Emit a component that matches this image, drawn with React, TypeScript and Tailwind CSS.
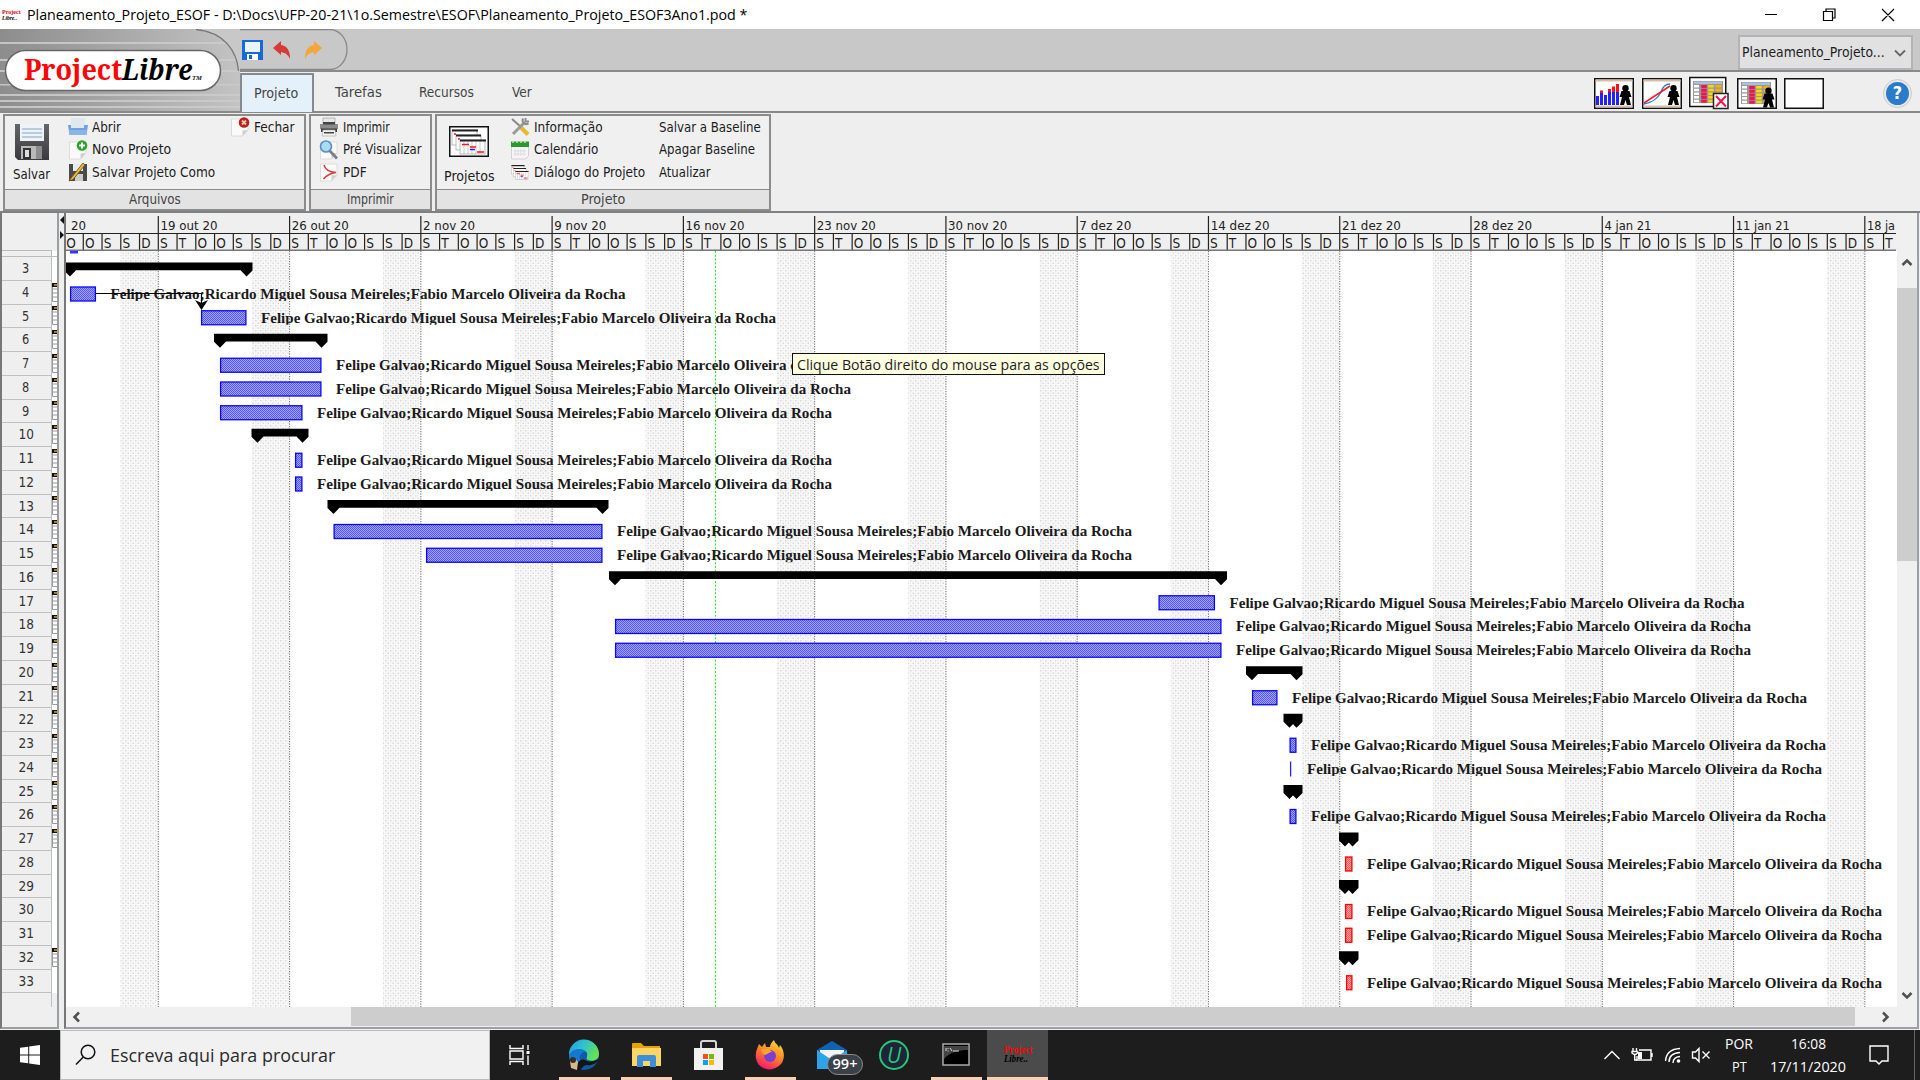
import React, { useLayoutEffect, useRef, useState } from "react";

/* Text squeezed or stretched to a fixed width. */
function Fit({ w, children, className = "" }: { w: number; children: string; className?: string }) {
  const ref = useRef<HTMLSpanElement>(null);
  const [s, setS] = useState(1);
  useLayoutEffect(() => {
    if (ref.current) setS(w / ref.current.offsetWidth);
  }, [w]);
  return (
    <span className={"block shrink-0 whitespace-nowrap " + className} style={{ width: w }}>
      <span ref={ref} className="inline-block origin-left" style={{ transform: `scaleX(${s})` }}>
        {children}
      </span>
    </span>
  );
}

const UI = "font-['DejaVu_Sans_Condensed','DejaVu_Sans',sans-serif]";
const SEG = "font-['Open_Sans','Noto_Sans',sans-serif]";

/* ---------- ribbon icons ---------- */
const BigSave = () => (
  <svg width="36" height="38" viewBox="0 0 36 38">
    <defs>
      <linearGradient id="bs" x1="0" y1="0" x2="0" y2="1">
        <stop offset="0" stopColor="#666" />
        <stop offset="1" stopColor="#3a3a3e" />
      </linearGradient>
    </defs>
    <path d="M1 1H35V37H4L1 34Z" fill="url(#bs)" />
    <rect x="6" y="1" width="24" height="17" fill="#eef3f8" />
    <path d="M8 6H28M8 10H28M8 14H28" stroke="#a9bfd4" strokeWidth="1.5" />
    <rect x="7" y="23" width="21" height="13" fill="#b9b9b9" />
    <rect x="9" y="25" width="8" height="11" fill="#333" />
    <rect x="11" y="27" width="4" height="7" fill="#ddd" />
    <rect x="22" y="23" width="6" height="13" fill="#8d8d8d" />
  </svg>
);
const OpenIcon = () => (
  <svg width="20" height="20" viewBox="0 0 20 20">
    <path d="M3 1H17V12H3Z" fill="#dfe7ef" />
    <path d="M0 8H3V11H16V8H20L18.500 18H1.500Z" fill="#6fa3e0" />
    <path d="M1 13H19L18 18H2Z" fill="#88b6ea" />
  </svg>
);
const PageIcon = ({ kind }: { kind: "plus" | "x" | "pdf" | "zoom" }) => (
  <svg width="20" height="20" viewBox="0 0 20 20">
    <path d="M1.500 2H18V13L12.500 19H1.500Z" fill="#fafafa" stroke="#d6d6d6" strokeWidth=".8" />
    <path d="M18 13L12.500 19V13.500Z" fill="#cfcfcf" />
    {kind === "plus" && (
      <g>
        <circle cx="14" cy="5.500" r="5.300" fill="#2ea32e" />
        <path d="M14 2.500V8.500M11 5.500H17" stroke="#fff" strokeWidth="2" />
      </g>
    )}
    {kind === "x" && (
      <g>
        <circle cx="14" cy="5.500" r="5.300" fill="#b5231b" />
        <path d="M12 3.500L16 7.500M16 3.500L12 7.500" stroke="#f5c0b8" strokeWidth="1.800" />
      </g>
    )}
    {kind === "pdf" && <path d="M5 3C6 7 10 10 17 10.500C12 11 8 13 4.500 17" stroke="#d93c3c" strokeWidth="1.500" fill="none" />}
    {kind === "zoom" && (
      <g>
        <path d="M10 10L18 18.500" stroke="#7c8088" strokeWidth="2.800" />
        <circle cx="7" cy="6.500" r="5.500" fill="#a8dcf2" stroke="#5b8fc4" strokeWidth="1.600" />
      </g>
    )}
  </svg>
);
const SaveAs = () => (
  <svg width="20" height="20" viewBox="0 0 20 20">
    <path d="M1 2H19V19H2L1 18Z" fill="#4a4a4a" />
    <rect x="5" y="2" width="10" height="7" fill="#e6ebf0" />
    <rect x="7" y="12" width="8" height="7" fill="#ccc" />
    <path d="M15 1L3 16L1 19L5 17.500L17 3Z" fill="#e9b83a" stroke="#5d4613" strokeWidth=".8" />
  </svg>
);
const Printer = () => (
  <svg width="20" height="20" viewBox="0 0 20 20">
    <path d="M4 1H16V8H4Z" fill="#e6e6e6" stroke="#999" strokeWidth=".6" />
    <path d="M1 7H19V12H1Z" fill="#8b8b8b" />
    <path d="M2 11.500H18V15H2Z" fill="#3f3f3f" />
    <path d="M4 13H16L17 19H3Z" fill="#f3f3f3" stroke="#aaa" strokeWidth=".6" />
    <path d="M4 5H16V7.500H4ZM5 15H15V16.500H5Z" fill="#444" />
  </svg>
);
const Tools = () => (
  <svg width="20" height="20" viewBox="0 0 20 20">
    <path d="M2 2L11 10" stroke="#888" strokeWidth="2" />
    <path d="M10 9.500L18 17.500" stroke="#e8b92c" strokeWidth="4" />
    <path d="M3 17L14 6" stroke="#9a9a9a" strokeWidth="3" />
    <path d="M13 1.500C11.500 5 14.500 8.500 18.500 6.500M15.500 1V4.500H19" stroke="#8d8d8d" strokeWidth="2" fill="none" />
  </svg>
);
const Calendar = () => (
  <svg width="20" height="20" viewBox="0 0 20 20">
    <path d="M1.500 5H18.500V16L15 19H1.500Z" fill="#f6f6f6" stroke="#d2d2d2" />
    <rect x="1" y="1.500" width="18" height="5.500" fill="#2b9a2b" />
    <path d="M3 1V3M7 1V3M11 1V3M15 1V3" stroke="#bfe6bf" strokeWidth="1.500" />
    <path d="M5 9V16M8 9V16M11 9V16M14 9V16M4 11H16M4 14H16" stroke="#ddd6e2" strokeWidth=".8" />
  </svg>
);
const Sheets = ({ big }: { big?: boolean }) => (
  <svg width={big ? 40 : 20} height={big ? 31 : 18} viewBox="0 0 40 31" preserveAspectRatio="none">
    {big && <rect x=".75" y=".75" width="38.500" height="29.500" fill="#fff" stroke="#111" strokeWidth="1.500" />}
    <g fill="#fff" stroke="#aaa" strokeWidth=".8">
      <rect x="3" y="4" width="25" height="15" />
      <rect x="7" y="9" width="25" height="15" />
      <rect x="11" y="14" width="25" height="14" />
    </g>
    <path d="M15 14V28M19 14V28M23 14V28M27 14V28M31 14V28" stroke="#bbb" strokeWidth=".8" />
    <path d="M3 4.500H29M7 9.500H32M11 14.500H37" stroke="#222" strokeWidth="1.800" />
    <path d="M5 8H7M9 13H11M13 18.500H20M21 21H27M28 26H35" stroke="#f01818" strokeWidth="1.500" />
    <path d="M21 23.500H26" stroke="#22f" strokeWidth="1.500" />
  </svg>
);

const Item = ({ icon, w, children }: { icon?: React.ReactNode; w: number; children: string }) => (
  <div className="flex h-[22.5px] items-center">
    {icon && <span className="mr-1 w-5 shrink-0">{icon}</span>}
    <Fit w={w}>{children}</Fit>
  </div>
);

const Group = ({ w, label, lw, children }: { w: string; label: string; lw: number; children: React.ReactNode }) => (
  <div className={"flex h-[97px] flex-col border-2 border-[#8b8b8b] bg-[#f0f0f0] " + w}>
    <div className="flex grow">{children}</div>
    <div className="flex h-[20px] items-center justify-center border-t border-[#8b8b8b] bg-[#e3e3e3] text-[#444]">
      <Fit w={lw}>{label}</Fit>
    </div>
  </div>
);

/* ---------- view buttons ---------- */
const Person = ({ x, y }: { x: number; y: number }) => (
  <g transform={`translate(${x} ${y})`} fill="#000">
    <circle cx="6" cy="3.200" r="3.200" />
    <path d="M2 6H10L12 12H9.500L11.500 20H7.500L6 15L4.500 20H.5L2.500 12H0Z" />
  </g>
);
const Table = () => (
  <g>
    <rect x="4" y="4" width="30" height="22" fill="#999" />
    <rect x="5" y="4.500" width="28" height="2.500" fill="#a9c0e4" />
    <path d="M7.500 8V26" stroke="#fff" strokeWidth="5" strokeDasharray="2.500 1.200" />
    <path d="M15 8V26" stroke="#f0134d" strokeWidth="5.500" strokeDasharray="3 .7" />
    <path d="M22 8V26" stroke="#ffd800" strokeWidth="5.500" strokeDasharray="2.500 1.200" />
    <path d="M29.500 8V26" stroke="#f5b400" strokeWidth="6" strokeDasharray="2.500 1.200" />
  </g>
);
const Box = ({ children, tan }: { children?: React.ReactNode; tan?: boolean }) => (
  <svg width="40" height="31" viewBox="0 0 40 31" overflow="visible">
    <rect x=".75" y=".75" width="38.500" height="29.500" fill="#fff" stroke="#111" strokeWidth="1.500" />
    {tan && <path d="M1.500 2.500H38.500M1.500 28.500H38.500" stroke="#d9bda8" strokeWidth="2" />}
    {children}
  </svg>
);

/* ---------- schedule ---------- */
type Row = { n: number; t: "s" | "b" | "r" | "l"; a: number; z: number };
const rows: Row[] = [
  { n: 3, t: "s", a: 64, z: 252.5 }, { n: 4, t: "b", a: 70, z: 96 }, { n: 5, t: "b", a: 201, z: 246.5 },
  { n: 6, t: "s", a: 214, z: 327.5 }, { n: 7, t: "b", a: 220, z: 321.5 }, { n: 8, t: "b", a: 220, z: 321.5 },
  { n: 9, t: "b", a: 220, z: 302.5 }, { n: 10, t: "s", a: 251.5, z: 308.5 }, { n: 11, t: "b", a: 295, z: 302.5 },
  { n: 12, t: "b", a: 295, z: 302.5 }, { n: 13, t: "s", a: 327.5, z: 608.5 }, { n: 14, t: "b", a: 333.5, z: 602.5 },
  { n: 15, t: "b", a: 426, z: 602.5 }, { n: 16, t: "s", a: 609, z: 1227 }, { n: 17, t: "b", a: 1158.5, z: 1215 },
  { n: 18, t: "b", a: 615, z: 1221.5 }, { n: 19, t: "b", a: 615, z: 1221.5 }, { n: 20, t: "s", a: 1246, z: 1302.5 },
  { n: 21, t: "b", a: 1252, z: 1277.5 }, { n: 22, t: "s", a: 1283.5, z: 1302.5 }, { n: 23, t: "b", a: 1289.5, z: 1296.5 },
  { n: 24, t: "l", a: 1290, z: 1292.5 }, { n: 25, t: "s", a: 1283.5, z: 1302.5 }, { n: 26, t: "b", a: 1289.5, z: 1296.5 },
  { n: 27, t: "s", a: 1339, z: 1358.5 }, { n: 28, t: "r", a: 1345, z: 1352.5 }, { n: 29, t: "s", a: 1339, z: 1358.5 },
  { n: 30, t: "r", a: 1345, z: 1352.5 }, { n: 31, t: "r", a: 1345, z: 1352.5 }, { n: 32, t: "s", a: 1339, z: 1358.5 },
  { n: 33, t: "r", a: 1346, z: 1352.5 },
];
const cy = (n: number) => 294 + (n - 4) * 23.75;
const WEEK = 131.27;
const weeks = ["19 out 20", "26 out 20", "2 nov 20", "9 nov 20", "16 nov 20", "23 nov 20", "30 nov 20", "7 dez 20", "14 dez 20", "21 dez 20", "28 dez 20", "4 jan 21", "11 jan 21", "18 ja"];
const weekW = [57, 57, 52, 52, 59, 59, 59, 52, 59, 59, 59, 47, 54, 28];
const days = ["S", "T", "O", "O", "S", "S", "D"];
const NAMES = "Felipe Galvao;Ricardo Miguel Sousa Meireles;Fabio Marcelo Oliveira da Rocha";

const Ruler = () => (
  <svg width="1830" height="37" viewBox="66 214 1830 37" className="block shrink-0">
    <rect x="66" y="214" width="1830" height="37" fill="#efefef" />
    <path d="M66 233.500H1896" stroke="#222" strokeWidth="1.200" />
    <g className={UI} fontSize="13" fill="#222">
      <text x="71" y="229.500" textLength="15" lengthAdjust="spacingAndGlyphs">20</text>
      {weeks.map((w, i) => (
        <text key={i} x={160.5 + i * WEEK} y="229.500" textLength={weekW[i]} lengthAdjust="spacingAndGlyphs">{w}</text>
      ))}
      {Array.from({ length: 98 }, (_, k) => k - 5).map((k) => {
        const x = 158.3 + (k * WEEK) / 7;
        return x < 1893 ? (
          <g key={k}>
            <path d={`M${x} ${k % 7 === 0 ? 216 : 234}V250`} stroke="#222" strokeWidth="1.200" />
            <text x={x + 1.6} y="248.300" fontSize="13.500">{days[(k + 7) % 7]}</text>
          </g>
        ) : null;
      })}
    </g>
    <path d="M66 250.200H1896" stroke="#777" strokeWidth="1.600" />
  </svg>
);

const Chart = () => (
  <svg width="1831" height="756" viewBox="66 251 1831 756" className="block shrink-0">
    <defs>
      <pattern id="we" width="5" height="5" patternUnits="userSpaceOnUse">
        <rect width="5" height="5" fill="#fafafa" />
        <rect x="0" y="0" width="1.500" height="1.500" fill="#dadada" />
        <rect x="2.500" y="2.500" width="1.500" height="1.500" fill="#dadada" />
        <rect x="2.500" y="0" width="1.200" height="1.200" fill="#ebebeb" />
        <rect x="0" y="2.500" width="1.200" height="1.200" fill="#ebebeb" />
      </pattern>
      <pattern id="bl" width="2" height="2" patternUnits="userSpaceOnUse">
        <rect width="2" height="2" fill="#a2a2ff" />
        <path d="M0 0H1V1H2V2H1V1H0Z" fill="#5656ff" shapeRendering="crispEdges" />
      </pattern>
      <pattern id="rd" width="2" height="2" patternUnits="userSpaceOnUse">
        <rect width="2" height="2" fill="#ffa2a2" />
        <path d="M0 0H1V1H2V2H1V1H0Z" fill="#ff5656" shapeRendering="crispEdges" />
      </pattern>
      <clipPath id="cl">
        {rows.map((r) => <rect key={r.n} x="66" y={cy(r.n) - 10} width="1831" height="17" />)}
      </clipPath>
    </defs>
    <rect x="66" y="251" width="1831" height="756" fill="#fff" />
    {Array.from({ length: 14 }, (_, i) => (
      <g key={i}>
        <rect x={120.5 + i * WEEK} y="251" width="37" height="756" fill="url(#we)" />
        <path d={`M${158.3 + i * WEEK} 251V1007`} stroke="#777" strokeWidth="1.100" strokeDasharray="1.25 1.25" />
      </g>
    ))}
    <path d="M715.500 251V1007" stroke="#22f022" strokeWidth="1.100" strokeDasharray="2 1.75" />
    <rect x="70" y="251" width="8" height="2.500" fill="#33f" />
    {rows.map(({ n, t, a, z }) => {
      const y = cy(n);
      if (t === "s")
        return (
          <path key={n} d={`M${a} ${y - 7.7}H${z}V${y + 0.3}L${z - 6} ${y + 6.3}L${z - 12} ${y}H${a + 12}L${a + 6} ${y + 6.3}L${a} ${y + 0.3}Z`} fill="#000" />
        );
      if (t === "l") return <path key={n} d={`M${a + 0.6} ${y - 7.5}V${y + 7.5}`} stroke="#22f" strokeWidth="1.300" />;
      return (
        <rect key={n} x={a + 0.6} y={y - 7} width={z - a - 1.2} height="14" strokeWidth="1.300"
          fill={t === "b" ? "url(#bl)" : "url(#rd)"} stroke={t === "b" ? "#0808f0" : "#f00"} />
      );
    })}
    <g clipPath="url(#cl)" fontSize="13.800" fontWeight="bold" fill="#1a1a1a" className="font-['Liberation_Serif',serif]">
      {rows.filter((r) => r.t !== "s").map((r) => (
        <text key={r.n} x={r.z + 14.5} y={cy(r.n) + 4.8} textLength="515" lengthAdjust="spacingAndGlyphs">{NAMES}</text>
      ))}
    </g>
    <path d="M96 293.500H201.500V303" stroke="#000" strokeWidth="1.200" fill="none" />
    <path d="M195 300L201.500 303L208 300L201.500 310Z" fill="#000" />
  </svg>
);

/* ---------- taskbar ---------- */
const Slot = ({ w, line, active, children }: { w: string; line?: boolean; active?: boolean; children: React.ReactNode }) => (
  <div className={"relative flex h-[50px] shrink-0 items-center justify-center " + w + (active ? " bg-[#4b4b4b]" : "")}>
    {children}
    {line && <div className={"absolute bottom-0 h-[3px] bg-[#fbcfb2] " + (active ? "w-[61px]" : "w-[51px]")} />}
  </div>
);

export default function App() {
  return (
    <div className={"flex h-[1080px] w-[1920px] flex-col overflow-hidden bg-[#eee] text-[13.5px] leading-none text-[#1c1c1c] " + UI}>
      {/* title bar */}
      <div className={"flex h-[29px] shrink-0 items-center bg-white pl-[2px] text-black " + SEG}>
        <div className="w-[20px] font-['Liberation_Serif',serif] text-[7px] font-bold leading-[6px]">
          <Fit w={19} className="text-red-600">Project</Fit>
          <Fit w={15} className="italic">Libre..</Fit>
        </div>
        <div className="ml-[5px] text-[15px]">
          <Fit w={720}>{"Planeamento_Projeto_ESOF - D:\\Docs\\UFP-20-21\\1o.Semestre\\ESOF\\Planeamento_Projeto_ESOF3Ano1.pod *"}</Fit>
        </div>
        <svg className="ml-auto mr-[24px]" width="132" height="16" viewBox="0 0 132 16" fill="none" stroke="#000" strokeWidth="1.200">
          <path d="M1 7.500H13M59.500 4.500H68.500V13.500H59.500ZM62 4V2H71V11H69M118 2L130 14M130 2L118 14" />
        </svg>
      </div>

      {/* quick access bar + tabs */}
      <div className="flex h-[84px] shrink-0 border-b-2 border-[#8a8a8a]">
        <div className="relative h-full w-[240px] shrink-0 overflow-hidden bg-[#c8c8c8]">
          <svg width="240" height="83" viewBox="0 29 240 83" className="absolute left-0 top-0">
            <defs>
              <linearGradient id="lg" x1="0" y1="0" x2="1" y2="0">
                <stop offset="0" stopColor="#8d8d8d" />
                <stop offset="1" stopColor="#c3c3c3" />
              </linearGradient>
              <linearGradient id="ln" x1="0" y1="0" x2="1" y2="0">
                <stop offset="0" stopColor="#c4c4c4" />
                <stop offset="1" stopColor="#cacaca" />
              </linearGradient>
            </defs>
            <path d="M0 29H200C225 34 237 52 238.500 71H240V112H0Z" fill="url(#lg)" />
            <g fill="url(#ln)">
              <rect y="42" width="225" height="2" />
              <rect y="59" width="236" height="2" />
              <rect y="70" width="240" height="2" />
              <rect y="84" width="240" height="1.500" />
              <rect y="94" width="240" height="2" />
              <rect y="100" width="240" height="2" />
              <rect y="106" width="240" height="2" />
            </g>
            <path d="M196 29.500C225 32 237 52 238.500 71" fill="none" stroke="#777" strokeWidth="1.300" />
            <rect x="5.500" y="50.500" width="215" height="40" rx="20" fill="#fff" stroke="#666" strokeWidth="1.500" />
          </svg>
          <div className="absolute left-[24px] top-[22px] flex h-[34px] items-center font-['Noto_Serif','DejaVu_Serif_Condensed','DejaVu_Serif',serif] text-[29px] font-bold">
            <Fit w={98} className="text-[#fb0606]">Project</Fit>
            <Fit w={70} className="italic text-black">Libre</Fit>
            <span className="mt-[20px] text-[6px] italic">TM</span>
          </div>
        </div>
        <div className="flex grow flex-col">
          <div className="flex h-[43px] shrink-0 border-b-2 border-[#8a8a8a] bg-[#c8c8c8]">
            <svg width="120" height="41" viewBox="240 29 120 41">
              <path d="M240 29.500H330A17 20 0 0 1 330 69.500H240" fill="none" stroke="#888" strokeWidth="1.300" />
              <rect x="242" y="40" width="21" height="20" fill="#1769d6" />
              <rect x="245" y="42" width="15" height="10" fill="#e9f4ff" />
              <rect x="247" y="54" width="11" height="6" fill="#fff" />
              <rect x="249" y="55" width="3" height="4" fill="#1769d6" />
              <path d="M273 48L281 41V45C287 46 290 50 290 59C288 55 286 53 281 52V55Z" fill="#d63b3b" />
              <path d="M322 48L314 41V45C308 46 305 50 305 59C307 55 309 53 314 52V55Z" fill="#f4a63a" />
            </svg>
            <div className="ml-auto mr-[7px] mt-[6px] flex h-[35px] w-[175px] items-center border-2 border-[#b4b4b8] bg-[#e1e1e1] pl-[2px]">
              <Fit w={143}>Planeamento_Projeto...</Fit>
              <svg className="ml-[9px]" width="12" height="8" viewBox="0 0 12 8"><path d="M1 1.500L6 6.500L11 1.500" fill="none" stroke="#666" strokeWidth="1.800" /></svg>
            </div>
          </div>
          <div className="flex grow items-center bg-[#eee] text-[#444]">
            <div className="mt-[1px] flex h-full w-[74px] items-center justify-center border-2 border-b-0 border-[#848a90] bg-[#e4f1fb] pr-[2px] pt-[1px]"><Fit w={44}>Projeto</Fit></div>
            <Fit w={47} className="ml-[21px] mt-[3px]">Tarefas</Fit>
            <Fit w={55} className="ml-[37px] mt-[3px]">Recursos</Fit>
            <Fit w={20} className="ml-[38px] mt-[3px]">Ver</Fit>
            <div className="ml-auto mr-[8px] mt-[4px] flex items-center">
              <div className="mr-[59px] flex gap-[7.500px]">
                <Box tan>
                  <path d="M3.500 27V18M7.500 27V14M11.500 27V17M15.500 27V13M19.500 27V12M23.500 27V13" stroke="#22f" strokeWidth="3" />
                  <path d="M7.500 15V12.500M15.500 14V11M19.500 14V8.500M23.500 14V6" stroke="#f11" strokeWidth="3" />
                  <Person x={25.500} y={7} />
                </Box>
                <Box tan>
                  <path d="M2 26C12 24 16 20 19 14C21 8 24 6 28 6" stroke="#37e" strokeWidth="1.500" fill="none" />
                  <path d="M2 25L28 8" stroke="#e22" strokeWidth="1.500" />
                  <Person x={25.500} y={7} />
                </Box>
                <svg width="40" height="31" viewBox="0 0 40 31" overflow="visible">
                  <rect x="-.5" y="-1.500" width="38" height="31" fill="#fff" />
                  <rect x=".75" y="-.5" width="36" height="29" fill="#fff" stroke="#111" strokeWidth="1.500" />
                  <g transform="translate(0 -1)"><Table /></g>
                  <rect x="24.500" y="15.500" width="14.500" height="15" fill="#fff" stroke="#222" strokeWidth="1.500" />
                  <path d="M27 18L37 28.500M37 18L27 28.500" stroke="#f0134d" strokeWidth="2" />
                </svg>
                <Box><Table /><Person x={25.500} y={9.500} /></Box>
                <Box />
              </div>
              <div className="-mt-[1px] flex h-[29px] w-[29px] items-center justify-center rounded-full border border-[#ccc] bg-[#e8e8e8]">
                <div className="flex h-[23px] w-[23px] items-center justify-center rounded-full bg-[#2b7bcb] text-[18px] font-bold text-white">?</div>
              </div>
            </div>
          </div>
        </div>
      </div>

      {/* ribbon */}
      <div className="flex h-[98px] shrink-0 gap-[3px] pl-[3px] pt-[1px]">
        <Group w="w-[303px]" label="Arquivos" lw={52}>
          <div className="flex w-[47px] flex-col items-center gap-[7px] pl-[6px] pt-[7px]"><BigSave /><Fit w={37}>Salvar</Fit></div>
          <div className="ml-[16px]">
            <Item icon={<OpenIcon />} w={28.5}>Abrir</Item>
            <Item icon={<PageIcon kind="plus" />} w={79}>Novo Projeto</Item>
            <Item icon={<SaveAs />} w={123}>Salvar Projeto Como</Item>
          </div>
          <div className="ml-[15px]"><Item icon={<PageIcon kind="x" />} w={41}>Fechar</Item></div>
        </Group>
        <Group w="w-[123px]" label="Imprimir" lw={47}>
          <div className="ml-[8px]">
            <Item icon={<Printer />} w={47}>Imprimir</Item>
            <Item icon={<PageIcon kind="zoom" />} w={79}>Pré Visualizar</Item>
            <Item icon={<PageIcon kind="pdf" />} w={24}>PDF</Item>
          </div>
        </Group>
        <Group w="w-[336px]" label="Projeto" lw={44}>
          <div className="flex w-[64px] flex-col items-center gap-[13px] pt-[10px]"><Sheets big /><Fit w={51}>Projetos</Fit></div>
          <div className="ml-[9px] w-[149px]">
            <Item icon={<Tools />} w={69}>Informação</Item>
            <Item icon={<Calendar />} w={64}>Calendário</Item>
            <Item icon={<Sheets />} w={111}>Diálogo do Projeto</Item>
          </div>
          <div>
            <Item w={102}>Salvar a Baseline</Item>
            <Item w={96}>Apagar Baseline</Item>
            <Item w={52}>Atualizar</Item>
          </div>
        </Group>
      </div>

      {/* main area */}
      <div className="flex h-[819px] shrink-0 border-t-2 border-[#7d8187] bg-[#f0f0f0]">
        <div className="relative flex h-[816px] w-[59px] shrink-0 flex-col border-2 border-t-0 border-[#9a9da3] border-l-[#777] bg-[#efefef]">
          <div className="h-[38px] w-[50px] shrink-0 border-b border-[#bbb]" />
          <div className="flex h-[6px] shrink-0 border-b border-[#bbb]">
            <div className="w-[50px] border-r border-[#bbb]" /><div className="grow bg-white" />
          </div>
          {rows.map((r) => (
            <div key={r.n} className="flex h-[23.75px] shrink-0">
              <div className="flex w-[50px] shrink-0 items-center justify-center border-b border-r border-[#c0c0c0] pr-[1px] pt-[1px] text-[#333]">
                <Fit w={r.n < 10 ? 7.5 : 15}>{String(r.n)}</Fit>
              </div>
              <div className="flex grow items-center justify-end bg-white">
                {![3, 28, 29, 30, 31, 33].includes(r.n) && (
                  <svg width="5" height="20" viewBox="0 0 5 20">
                    <path d="M.5 1V18.500H5M0 6H5M0 10H5M0 14H5" stroke="#999" fill="none" />
                    <rect width="5" height="4" fill="#111" /><rect x="2" y="1.200" width="3" height="1.500" fill="#e0a020" />
                  </svg>
                )}
              </div>
            </div>
          ))}
          <div className="h-[14px] w-[50px] border-r border-[#c0c0c0]" />
        </div>
        <div className="w-[5px] shrink-0 bg-[#eee]">
          <svg width="5" height="30" viewBox="0 0 5 30"><path d="M5 3V11L1 7ZM1 18V26L5 22Z" fill="#111" /></svg>
        </div>
        <div className="flex h-[816px] w-[1855px] shrink-0 flex-col border-b-2 border-l-2 border-r-2 border-[#9ba0a8] border-l-[#777] pt-[1px]">
          <Ruler />
          <div className="flex h-[756px]">
            <div className="relative">
              <Chart />
              <div className="absolute left-[726px] top-[102px] flex h-[22px] w-[313px] items-center border border-[#111] bg-[#ffffe1] pl-[4px] text-[15px]">
                <Fit w={303} className={SEG}>Clique Botão direito do mouse para as opções</Fit>
              </div>
            </div>
            <div className="flex grow flex-col items-center bg-[#f0f0f0]">
              <svg className="h-[37px] w-[20px]" viewBox="0 0 20 37"><path d="M5.500 14L10 9.500L14.500 14" fill="none" stroke="#505050" strokeWidth="2.500" /></svg>
              <div className="h-[273px] w-full bg-[#cdcdcd]" />
              <svg className="mt-auto h-[20px] w-[20px]" viewBox="0 0 20 20"><path d="M5.500 6L10 10.500L14.500 6" fill="none" stroke="#505050" strokeWidth="2.500" /></svg>
            </div>
          </div>
          <div className="flex h-[20px] bg-[#f0f0f0]">
            <svg width="285" height="20" viewBox="0 0 285 20"><path d="M13 5.500L8.500 10L13 14.500" fill="none" stroke="#505050" strokeWidth="2.500" /></svg>
            <div className="h-[19px] w-[1504px] bg-[#cdcdcd]" />
            <svg width="50" height="20" viewBox="0 0 50 20"><path d="M28 5.500L32.500 10L28 14.500" fill="none" stroke="#505050" strokeWidth="2.500" /></svg>
          </div>
        </div>
      </div>

      {/* taskbar */}
      <div className={"flex h-[50px] shrink-0 bg-[#1d1d1d] text-white " + SEG}>
        <Slot w="w-[60px]">
          <svg width="20" height="20" viewBox="0 0 20 20" fill="#fff"><path d="M0 2.800L8.200 1.700V9.500H0ZM9.200 1.500L20 0V9.500H9.200ZM0 10.500H8.200V18.300L0 17.200ZM9.200 10.500H20V20L9.200 18.500Z" /></svg>
        </Slot>
        <div className="flex h-[50px] w-[430px] shrink-0 items-center border border-[#bbb] bg-[#f1f1f1] pl-[14px] text-[18px] text-[#2b2b2b]">
          <svg width="22" height="22" viewBox="0 0 22 22" fill="none" stroke="#111" strokeWidth="1.500"><circle cx="13" cy="8" r="6.800" /><path d="M8.300 13L1 20.500" /></svg>
          <Fit w={225} className="ml-[13px]">Escreva aqui para procurar</Fit>
        </div>
        <Slot w="w-[60px]">
          <svg width="22" height="20" viewBox="0 0 22 20" fill="none" stroke="#fff" strokeWidth="1.400"><path d="M1 0V3.500H14V0M1 20V16.500H14V20M1 6H14V14H1ZM19 0V5M19 10.500V20" /><rect x="17.500" y="6" width="3" height="3" fill="#fff" stroke="none" /></svg>
        </Slot>
        <div className="w-[3px]" />
        <Slot w="w-[62px]" line>
          <svg width="32" height="32" viewBox="0 0 32 32">
            <defs><linearGradient id="ed" x1="0" y1="0" x2="1" y2=".5"><stop offset="0" stopColor="#1f9be0" /><stop offset=".5" stopColor="#2fc3cf" /><stop offset="1" stopColor="#66e055" /></linearGradient></defs>
            <circle cx="16" cy="16" r="15" fill="#0f5aa6" />
            <path d="M1 16A15 15 0 0 1 31 15C31 21 25 23 20 21C17 20 20 18 19 14C16 8 5 10 1 16Z" fill="url(#ed)" />
            <path d="M1 16C4 9 14 8 18 13C13 12 10 18 13 23L7 27C3 25 1 20 1 16Z" fill="#1479d0" />
            <path d="M9 31C7 25 12 19 17 21C22 24 26 22 31 20C29 25 22 27 19 26C15 26 14 30 12 31Z" fill="#151515" />
            <path d="M2 22L6 18L10 23L9 31L3 29Z" fill="#d6b98c" /><circle cx="5" cy="21" r="3" fill="#362a25" />
          </svg>
        </Slot>
        <Slot w="w-[62px]" line>
          <svg width="29" height="26" viewBox="0 0 29 26"><path d="M0 2Q0 1 1 1H9L12 4H28V24H0Z" fill="#e5a200" /><path d="M0 6H29V24H0Z" fill="#fdd566" /><path d="M5 25V15Q5 13 7 13H22Q24 13 24 15V25H18V19H11V25Z" fill="#3c8fd9" /></svg>
        </Slot>
        <Slot w="w-[62px]">
          <svg width="29" height="30" viewBox="0 0 29 30"><path d="M7 9V3Q7 1 9 1H20Q22 1 22 3V9" fill="none" stroke="#d6d6d6" strokeWidth="2" /><path d="M0 8H29V30H0Z" fill="#f1f1f1" /><rect x="9" y="14" width="5" height="5" fill="#f25022" /><rect x="15" y="14" width="5" height="5" fill="#7fba00" /><rect x="9" y="20" width="5" height="5" fill="#00a4ef" /><rect x="15" y="20" width="5" height="5" fill="#ffb900" /></svg>
        </Slot>
        <Slot w="w-[62px]" line>
          <svg width="30" height="30" viewBox="0 0 30 30">
            <defs><linearGradient id="ff" x1=".8" y1="0" x2=".3" y2="1"><stop offset="0" stopColor="#ffe23a" /><stop offset=".45" stopColor="#ff8a22" /><stop offset="1" stopColor="#f5156c" /></linearGradient></defs>
            <path d="M2 9L4 4L7 7L10 3L11 7H15C15 4 17 2 19 0C20 4 23 4 24 8L25 5C30 11 30 19 26 24C20 31 10 31 4 25C0 20 0 14 2 9Z" fill="url(#ff)" />
            <circle cx="15" cy="16" r="6" fill="#7a3fd0" /><path d="M6 10C10 8 15 9 17 12C14 12 13 14 10 15C8 14 7 12 6 10Z" fill="#ffa42e" />
          </svg>
        </Slot>
        <Slot w="w-[62px]">
          <svg width="30" height="30" viewBox="0 0 30 30"><path d="M0 10L15 1L30 10V29H0Z" fill="#0f63b5" /><path d="M3 10H27V20H3Z" fill="#f4f4f4" /><path d="M0 10L15 20L30 10V29H0Z" fill="#2aa4ea" /></svg>
          <div className="absolute left-[26px] top-[24px] flex h-[21px] w-[36px] items-center justify-center rounded-full border border-[#8d8d8d] bg-[#3a4148] text-[14.5px] font-semibold">99+</div>
        </Slot>
        <Slot w="w-[62px]">
          <div className="flex h-[30px] w-[30px] items-center justify-center rounded-full border-2 border-[#24c878] bg-[#1f2438] text-[21px] italic text-[#24c878]">U</div>
        </Slot>
        <Slot w="w-[62px]" line>
          <svg width="28" height="23" viewBox="0 0 28 23" className="-mt-[2px]"><rect x="1" y="1" width="26" height="21" fill="#000" stroke="#aaa" strokeWidth="1.500" /><path d="M2 3H26V7C16 7 8 9 2 16Z" fill="#444" /><path d="M4 5V8M6 5V6M6 7.500V8.500M8 5L10 8M11 8H17" stroke="#ddd" /></svg>
        </Slot>
        <Slot w="w-[61px]" line active>
          <div className="font-['Liberation_Serif',serif] text-[9.500px] font-bold leading-[9px]">
            <Fit w={28} className="text-[#f00]">Project</Fit>
            <Fit w={24} className="italic text-black">Libre..</Fit>
          </div>
        </Slot>
        <div className="ml-auto flex items-center">
          <svg width="108" height="24" viewBox="1603 1043 108 24" fill="none" stroke="#fff" strokeWidth="1.400">
            <path d="M1604.500 1059L1612 1051.500L1619.500 1059" />
            <path d="M1639 1050H1651V1060H1637V1056M1652 1053V1057" /><rect x="1638" y="1052" width="4" height="7" fill="#fff" stroke="none" />
            <path d="M1633 1048V1051M1636.500 1048V1051M1632 1051.500H1637.500V1053Q1635 1056 1632 1053ZM1634.700 1055V1060H1637" />
            <path d="M1665.500 1061C1666 1053 1671 1049 1680 1048.500M1669 1062C1669 1056 1673 1053 1680 1052.500M1673 1063C1673 1059 1675 1057 1680 1056.500" /><circle cx="1678.500" cy="1061" r="1.800" fill="#fff" stroke="none" />
            <path d="M1692.500 1052H1695.500L1699 1048.500V1061.500L1695.500 1058H1692.500ZM1702.500 1051.500L1709.500 1058.500M1709.500 1051.500L1702.500 1058.500" />
          </svg>
          <div className="ml-[14px] flex flex-col items-center gap-[8px] text-[14.5px] leading-[15px]"><Fit w={28}>POR</Fit><Fit w={15}>PT</Fit></div>
          <div className="ml-[17px] flex flex-col items-center gap-[8px] text-[14.5px] leading-[15px]"><Fit w={35}>16:08</Fit><Fit w={76}>17/11/2020</Fit></div>
          <svg className="ml-[23px] mr-[25px]" width="20" height="21" viewBox="0 0 20 21"><path d="M1 1H19V16H13L10 19L7 16H1Z" fill="none" stroke="#fff" strokeWidth="1.400" /></svg>
          <div className="mr-[5px] h-[50px] w-px bg-[#666]" />
        </div>
      </div>
    </div>
  );
}
